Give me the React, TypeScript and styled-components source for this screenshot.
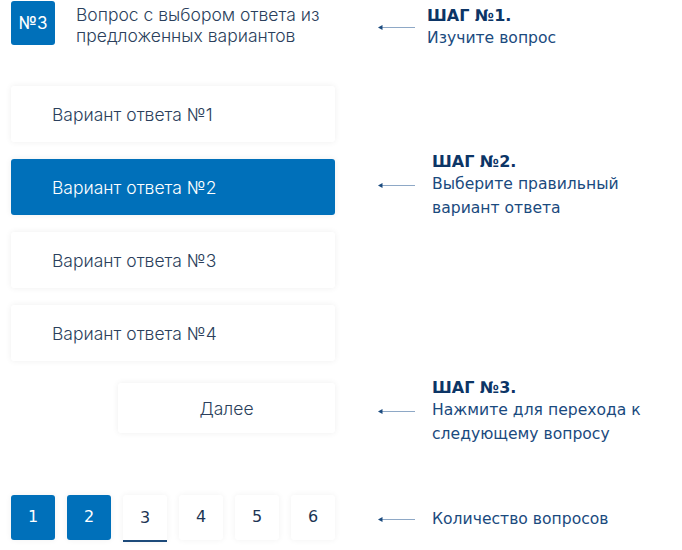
import React from 'react'
import styled, { createGlobalStyle } from 'styled-components'

const GlobalStyle = createGlobalStyle`
  html,
  body {
    background: #fff;
    margin: 0;
    padding: 0;
  }

  * {
    box-sizing: border-box;
  }
`

const Page = styled.div`
  display: grid;
  grid-template-columns: 324px 1fr;
  column-gap: 43px;
  padding: 1px 0 0 11px;
  width: 682px;
`

const LeftCell = styled.div<{ $mt?: number; $justify?: string }>`
  display: flex;
  justify-content: ${(props) => props.$justify || 'flex-start'};
  margin-top: ${(props) => props.$mt || 0}px;
`

// zero-height so the notes never stretch the rows; they hang centred on the row
const RightCell = styled.div<{ $mt?: number; $shift?: number }>`
  align-items: center;
  align-self: center;
  display: flex;
  height: 0;
  margin-top: ${(props) => (props.$mt || 0) + (props.$shift || 0) * 2}px;
`

const QuestionHeader = styled.div`
  align-items: flex-start;
  display: flex;
  gap: 21px;
  height: 44px;
`

const NumberBadge = styled.div`
  align-items: center;
  background: #0070ba;
  border-radius: 3px;
  color: #fff;
  display: flex;
  flex-shrink: 0;
  font-family: Inter, 'Noto Sans', sans-serif;
  font-size: 17px;
  height: 44px;
  justify-content: center;
  width: 44px;
`

const QuestionText = styled.div`
  color: #2b3f5c;
  font-family: Inter, 'Noto Sans', sans-serif;
  font-size: 17.5px;
  font-weight: 300;
  line-height: 20.5px;
  padding-top: 4px;
`

const AnswerCard = styled.div<{ $selected?: boolean }>`
  align-items: center;
  background: ${(props) => (props.$selected ? '#0070ba' : '#fff')};
  border-radius: 3px;
  box-shadow: 0 0 6px rgba(0, 0, 0, 0.07);
  color: ${(props) => (props.$selected ? '#fff' : '#2b3f5c')};
  display: flex;
  font-family: Inter, 'Noto Sans', sans-serif;
  font-size: 17.5px;
  font-weight: 300;
  height: 56px;
  padding-left: 41px;
  width: 324px;
`

const NextButton = styled.div`
  align-items: center;
  background: #fff;
  border-radius: 3px;
  box-shadow: 0 0 6px rgba(0, 0, 0, 0.07);
  color: #2b3f5c;
  display: flex;
  font-family: Inter, 'Noto Sans', sans-serif;
  font-size: 17.5px;
  font-weight: 300;
  height: 50px;
  justify-content: center;
  width: 217px;
`

const Pager = styled.div`
  align-items: flex-start;
  display: flex;
  gap: 12px;
  padding-bottom: 4px;
`

const PageBox = styled.div<{ $done?: boolean; $current?: boolean }>`
  align-items: center;
  background: ${(props) => (props.$done ? '#0070ba' : '#fff')};
  border-bottom: 2px solid ${(props) => (props.$current ? '#1d4a7a' : 'transparent')};
  border-radius: ${(props) => (props.$current ? '3px 3px 0 0' : '3px')};
  box-shadow: 0 0 6px rgba(0, 0, 0, 0.06);
  color: ${(props) => (props.$done ? '#fff' : '#1c3553')};
  display: flex;
  font-family: 'DejaVu Sans', Tahoma, sans-serif;
  font-size: 16px;
  height: ${(props) => (props.$current ? 47 : 45)}px;
  justify-content: center;
  width: 44px;
`

const Arrow = styled.svg`
  flex-shrink: 0;
  height: 7px;
  width: 38px;
`

const Note = styled.div<{ $gap: number }>`
  color: #1a4a7e;
  flex-shrink: 0;
  font-family: 'DejaVu Sans', Tahoma, sans-serif;
  font-size: 15.6px;
  line-height: 23.5px;
  margin-left: ${(props) => props.$gap}px;
`

const NoteTitle = styled.div`
  color: #0c3566;
  font-size: 16px;
  font-weight: 700;
`

const StepArrow: React.FC = () => (
  <Arrow viewBox="0 0 38 7">
    <line x1="3" y1="3.5" x2="37" y2="3.5" stroke="#8ea8c6" strokeWidth="1" />
    <path d="M0 3.5 L4.5 1 L4.5 6 Z" fill="#1a4a7e" />
  </Arrow>
)

const Step: React.FC<{ title?: string; lines: string[]; gap?: number }> = ({ title, lines, gap = 16 }) => (
  <>
    <StepArrow />
    <Note $gap={gap}>
      {title && <NoteTitle>{title}</NoteTitle>}
      {lines.map((line) => (
        <div key={line}>{line}</div>
      ))}
    </Note>
  </>
)

export default function App() {
  const answers = ['Вариант ответа №1', 'Вариант ответа №2', 'Вариант ответа №3', 'Вариант ответа №4']
  const pages = [1, 2, 3, 4, 5, 6]
  const current = 3

  return (
    <>
      <GlobalStyle />
      <Page>
        <LeftCell>
          <QuestionHeader>
            <NumberBadge>№3</NumberBadge>
            <QuestionText>
              Вопрос с выбором ответа из
              <br />
              предложенных вариантов
            </QuestionText>
          </QuestionHeader>
        </LeftCell>
        <RightCell $shift={4}>
          <Step title="ШАГ №1." lines={['Изучите вопрос']} gap={11} />
        </RightCell>

        {answers.map((answer, index) => (
          <React.Fragment key={answer}>
            <LeftCell $mt={index === 0 ? 41 : 17}>
              <AnswerCard $selected={index === 1}>{answer}</AnswerCard>
            </LeftCell>
            <RightCell $mt={index === 0 ? 41 : 17} $shift={-2}>
              {index === 1 && <Step title="ШАГ №2." lines={['Выберите правильный', 'вариант ответа']} />}
            </RightCell>
          </React.Fragment>
        ))}

        <LeftCell $mt={22} $justify="flex-end">
          <NextButton>Далее</NextButton>
        </LeftCell>
        <RightCell $mt={22} $shift={3}>
          <Step title="ШАГ №3." lines={['Нажмите для перехода к', 'следующему вопросу']} />
        </RightCell>

        <LeftCell $mt={62}>
          <Pager>
            {pages.map((page) => (
              <PageBox key={page} $done={page < current} $current={page === current}>
                {page}
              </PageBox>
            ))}
          </Pager>
        </LeftCell>
        <RightCell $mt={62} $shift={-1}>
          <Step lines={['Количество вопросов']} />
        </RightCell>
      </Page>
    </>
  )
}
